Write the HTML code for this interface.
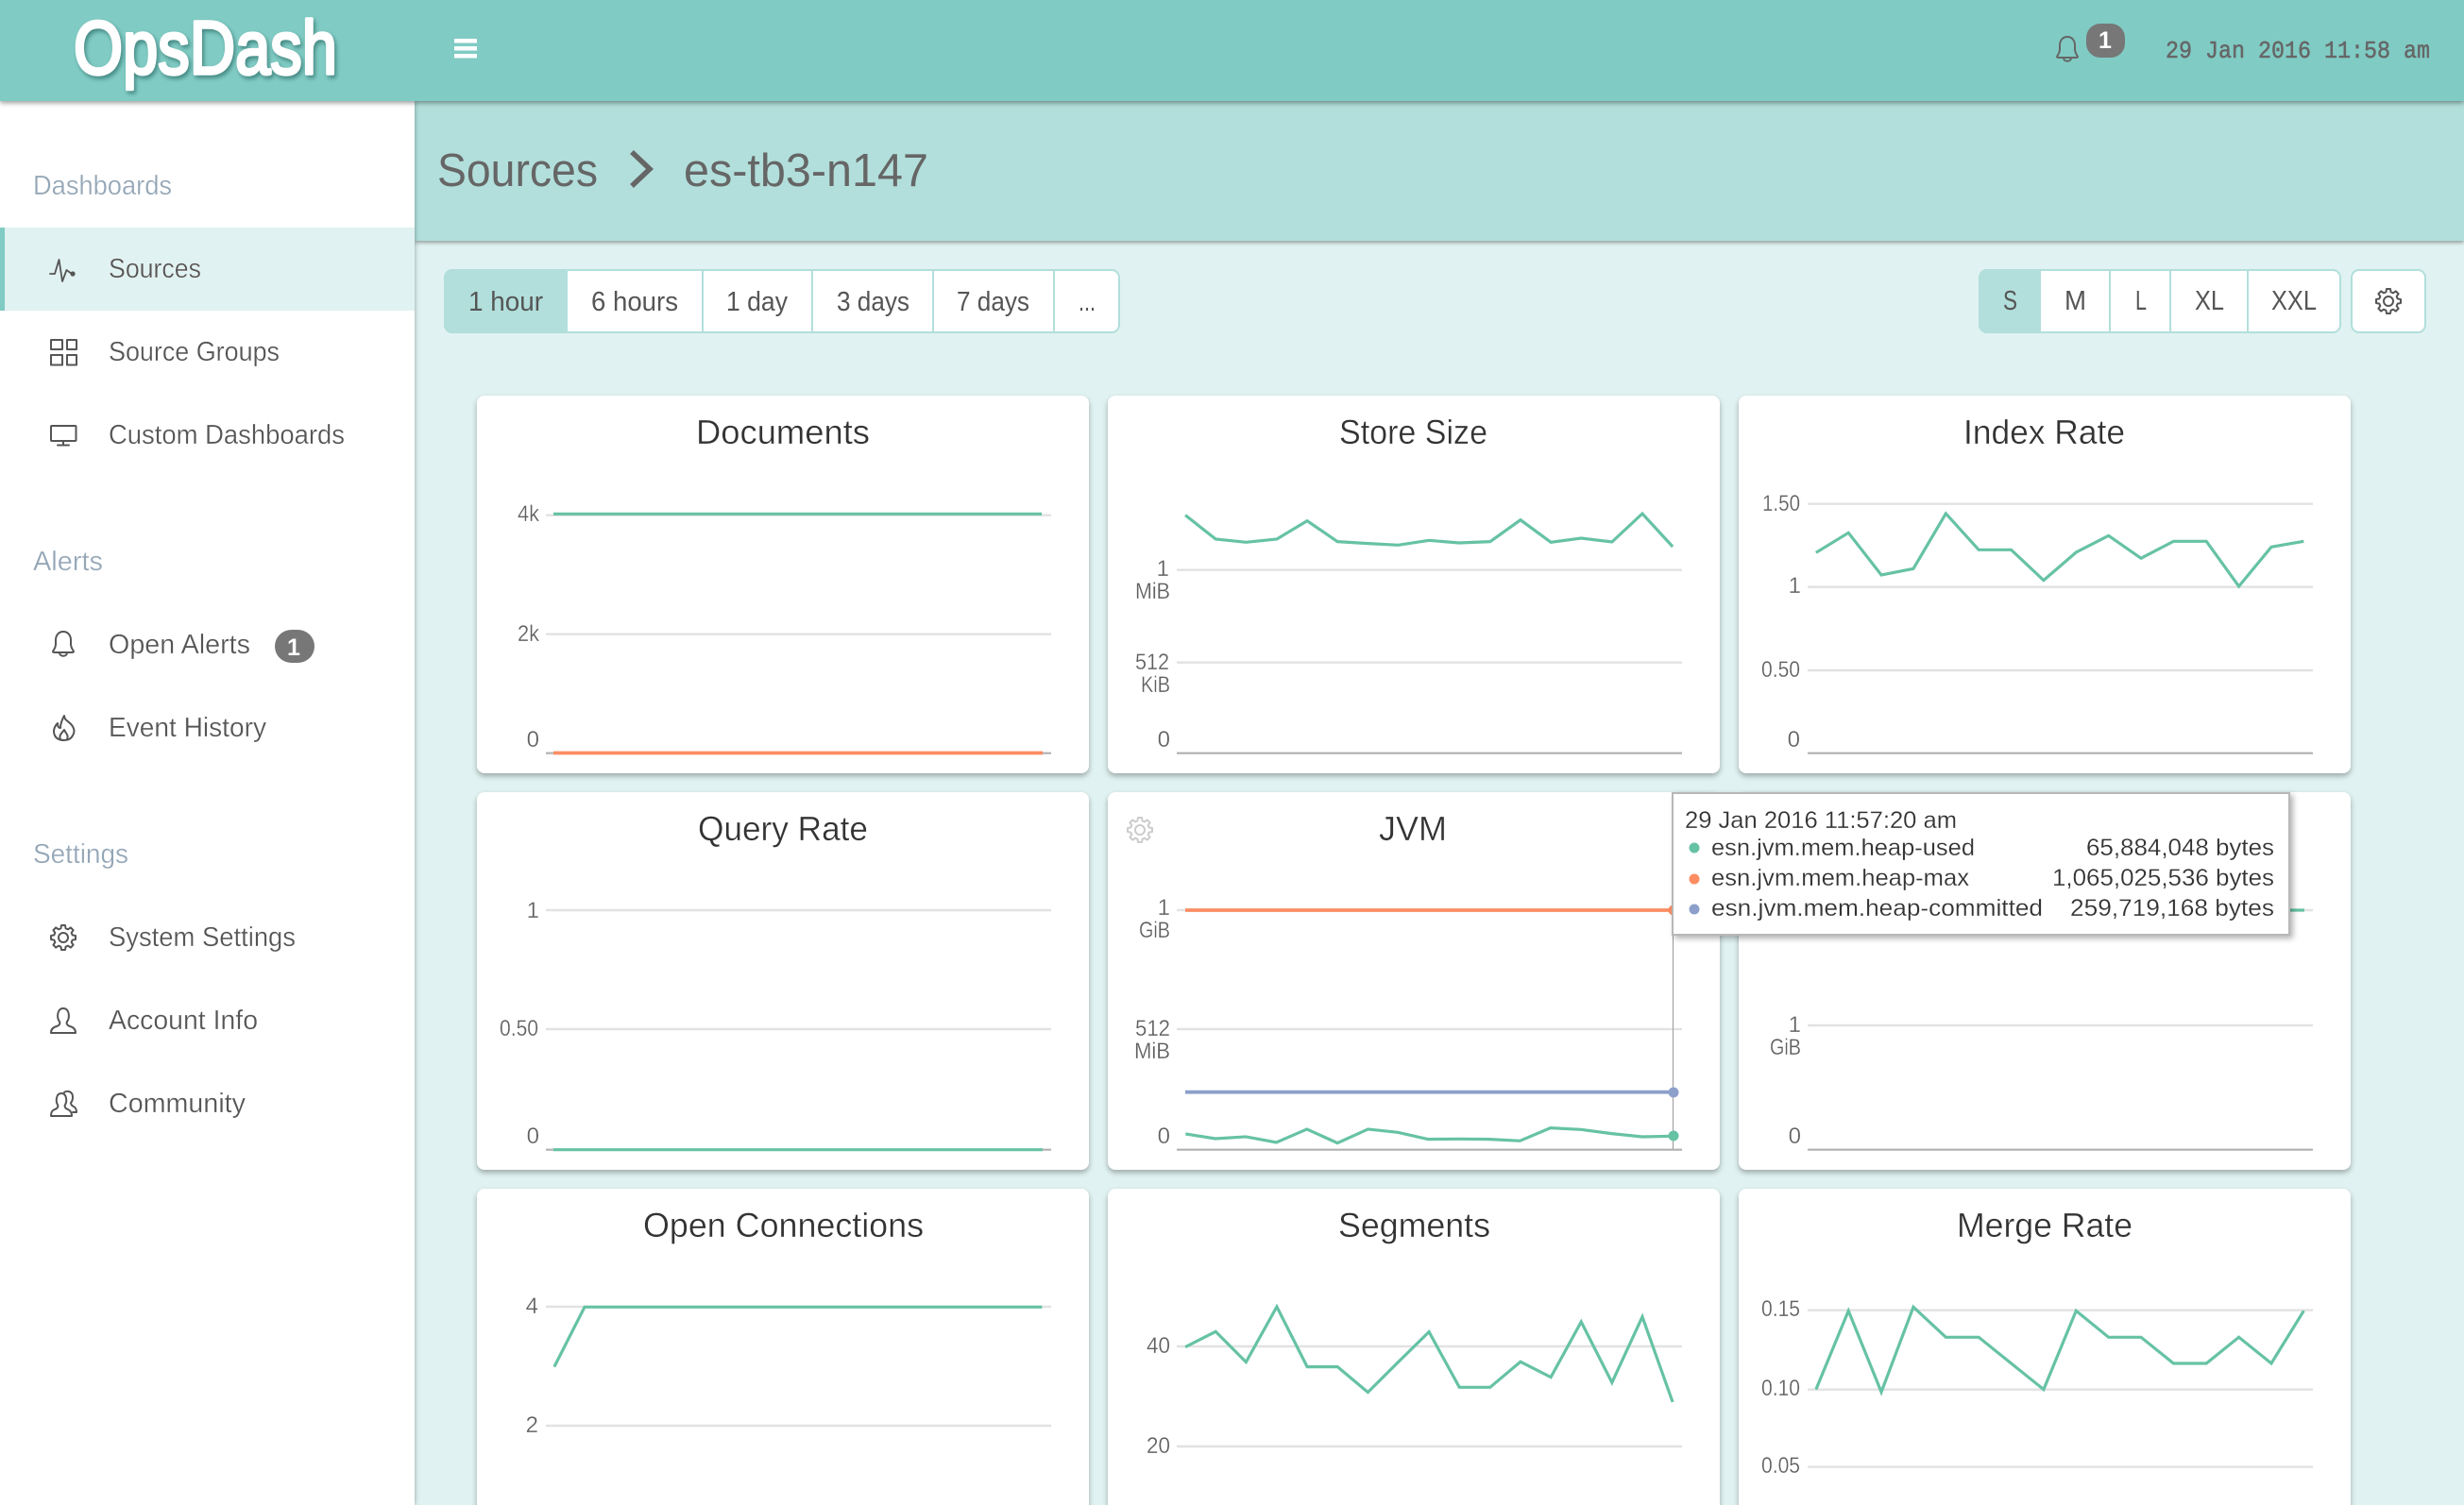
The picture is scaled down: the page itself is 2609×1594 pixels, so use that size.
<!DOCTYPE html>
<html lang="en">
<head>
<meta charset="utf-8">
<title>OpsDash - Sources - es-tb3-n147</title>
<style>
html,body{margin:0;padding:0;width:2609px;height:1594px;overflow:hidden;background:#e0f2f1}
body{position:relative;font-family:"Liberation Sans",sans-serif}
.abs{position:absolute}
#header{left:0;top:0;width:2609px;height:107px;background:#80cbc4;box-shadow:0 2px 5px rgba(0,0,0,.4);z-index:3}
#head{left:439px;top:107px;width:2170px;height:148px;background:#b2dfdb;box-shadow:0 2px 4px rgba(0,0,0,.35);z-index:1}
#side{left:0;top:107px;width:439px;height:1487px;background:#fff;box-shadow:0 0 5px rgba(0,0,0,.35);z-index:2}
#active{left:0;top:241px;width:434px;height:88px;background:#e0f2f1;border-left:5px solid #80cbc4;z-index:2}
.card{position:absolute;width:648px;height:400px;background:#fff;border-radius:8px;box-shadow:0 3px 6px rgba(0,0,0,.3);z-index:1}
.grp{position:absolute;top:285px;height:64px;border:2px solid #b2dfdb;border-radius:9px;background:#fff;z-index:1}
.on{position:absolute;top:285px;height:68px;background:#b2dfdb;border-radius:9px 0 0 9px;z-index:1}
.div{position:absolute;top:285px;width:2px;height:68px;background:#b2dfdb;z-index:1}
#tip{left:1770px;top:839px;width:651px;height:148px;background:#fff;border:2px solid #b8b8b8;box-shadow:3px 3px 6px rgba(0,0,0,.3);z-index:6}
svg.ov{position:absolute;left:0;top:0;width:2609px;height:1594px}
#o1{z-index:5}#o2{z-index:7}
text{font-family:"Liberation Sans",sans-serif}
.nav{font-size:29px;fill:#555;stroke:#fff;stroke-width:.3}
.sec{font-size:29px;fill:#94a6b6;stroke:#fff;stroke-width:.3}
.bt{font-size:29px;fill:#555}
.ttl{font-size:36px;fill:#333;stroke:#fff;stroke-width:.35}
.ax{font-size:24px;fill:#5f5f5f;stroke:#fff;stroke-width:.25}
.tt{font-size:25px;fill:#333;stroke:#fff;stroke-width:.2}
.ic{fill:none;stroke:#555;stroke-width:2;stroke-linejoin:round;stroke-linecap:round}
.g{stroke:#e2e2e2;stroke-width:2.4}
.a{stroke:#b0b0b0;stroke-width:2.2}
.l{fill:none;stroke-width:3.2;stroke-linejoin:miter;vector-effect:non-scaling-stroke}
.gr{stroke:#66c2a5}.or{stroke:#fc8d62;stroke-width:3.8}.bl{stroke:#8da0cb;stroke-width:3.8}
</style>
</head>
<body>
<div class="abs" id="header"></div>
<div class="abs" id="head"></div>
<div class="abs" id="side"></div>
<div class="abs" id="active"></div>

<div class="on" style="left:470px;width:131px"></div>
<div class="grp" style="left:470px;width:712px"></div>
<div class="on" style="left:470px;width:131px;z-index:1"></div>
<div class="div" style="left:743px"></div>
<div class="div" style="left:859px"></div>
<div class="div" style="left:987px"></div>
<div class="div" style="left:1115px"></div>

<div class="grp" style="left:2095px;width:380px"></div>
<div class="on" style="left:2095px;width:66px"></div>
<div class="div" style="left:2233px"></div>
<div class="div" style="left:2297px"></div>
<div class="div" style="left:2379px"></div>
<div class="grp" style="left:2489px;width:76px"></div>

<div class="card" style="left:505px;top:419px"></div>
<div class="card" style="left:1173px;top:419px"></div>
<div class="card" style="left:1841px;top:419px"></div>
<div class="card" style="left:505px;top:839px"></div>
<div class="card" style="left:1173px;top:839px"></div>
<div class="card" style="left:1841px;top:839px"></div>
<div class="card" style="left:505px;top:1259px"></div>
<div class="card" style="left:1173px;top:1259px"></div>
<div class="card" style="left:1841px;top:1259px"></div>

<svg class="ov" id="o1" viewBox="0 0 2609 1594" xmlns="http://www.w3.org/2000/svg">
<defs>
<path id="gear" d="M-2.59-9.66L-2-13H2L2.59-9.66L5-8.66L7.78-10.61L10.61-7.78L8.66-5L9.66-2.59L13-2V2L9.66 2.59L8.66 5L10.61 7.78L7.78 10.61L5 8.66L2.59 9.66L2 13H-2L-2.59 9.66L-5 8.66L-7.78 10.61L-10.61 7.78L-8.66 5L-9.66 2.59L-13 2V-2L-9.66-2.59L-8.66-5L-10.61-7.78L-7.78-10.61L-5-8.66Z M5 0A5 5 0 1 1-5 0A5 5 0 1 1 5 0Z"/>
<path id="bell" d="M12 1C7 1 4 5 4 10V14C4 18 2 20 1 22C1 23 2 23 3 23H21C22 23 23 23 23 22C22 20 20 18 20 14V10C20 5 17 1 12 1Z M8 23C8 28 16 28 16 23"/>
</defs>

<!-- header -->
<text x="78" y="78" textLength="279" lengthAdjust="spacingAndGlyphs" style="font-size:80px;fill:#fff;stroke:#fff;stroke-width:3.5;stroke-linejoin:round;filter:drop-shadow(2px 3px 2px rgba(0,60,55,.45))">OpsDash</text>
<rect x="481" y="41" width="24" height="4.5" fill="#fff"/>
<rect x="481" y="49" width="24" height="4.5" fill="#fff"/>
<rect x="481" y="57" width="24" height="4.5" fill="#fff"/>
<use href="#bell" transform="translate(2177 38)" class="ic" style="stroke:#666"/>
<rect x="2209" y="25" width="41" height="36" rx="15" fill="#777"/>
<text x="2229" y="51" text-anchor="middle" style="font-size:25px;font-weight:bold;fill:#fff">1</text>
<text x="2293" y="61" textLength="280" lengthAdjust="spacingAndGlyphs" style="font-family:'Liberation Mono',monospace;font-size:26px;fill:#666;stroke:#666;stroke-width:.5">29 Jan 2016 11:58 am</text>

<!-- breadcrumb -->
<text x="463" y="197" textLength="170" lengthAdjust="spacingAndGlyphs" style="font-size:49px;fill:#666">Sources</text>
<path d="M669 161L688 179L669 197" fill="none" stroke="#666" stroke-width="5.5"/>
<text x="724" y="197" textLength="259" lengthAdjust="spacingAndGlyphs" style="font-size:49px;fill:#666">es-tb3-n147</text>

<!-- sidebar -->
<text class="sec" x="35" y="206" textLength="147" lengthAdjust="spacingAndGlyphs">Dashboards</text>
<text class="nav" x="115" y="294" textLength="98" lengthAdjust="spacingAndGlyphs">Sources</text>
<text class="nav" x="115" y="382" textLength="181" lengthAdjust="spacingAndGlyphs">Source Groups</text>
<text class="nav" x="115" y="470" textLength="250" lengthAdjust="spacingAndGlyphs">Custom Dashboards</text>
<text class="sec" x="35" y="604" textLength="74" lengthAdjust="spacingAndGlyphs">Alerts</text>
<text class="nav" x="115" y="692" textLength="150" lengthAdjust="spacingAndGlyphs">Open Alerts</text>
<rect x="291" y="667" width="42" height="35" rx="17.5" fill="#777"/>
<text x="311" y="694" text-anchor="middle" style="font-size:25px;font-weight:bold;fill:#fff">1</text>
<text class="nav" x="115" y="780" textLength="167" lengthAdjust="spacingAndGlyphs">Event History</text>
<text class="sec" x="35" y="914" textLength="101" lengthAdjust="spacingAndGlyphs">Settings</text>
<text class="nav" x="115" y="1002" textLength="198" lengthAdjust="spacingAndGlyphs">System Settings</text>
<text class="nav" x="115" y="1090" textLength="158" lengthAdjust="spacingAndGlyphs">Account Info</text>
<text class="nav" x="115" y="1178" textLength="145" lengthAdjust="spacingAndGlyphs">Community</text>

<!-- sidebar icons -->
<path class="ic" d="M53 290H58L62.5 275L66 298L70.5 286L76 290" style="stroke-width:1.8"/>
<circle cx="77" cy="290" r="2.6" fill="#555"/>
<g class="ic">
<rect x="54" y="360" width="12" height="10"/><rect x="71" y="360" width="10" height="10"/>
<rect x="54" y="376" width="12" height="10.5"/><rect x="71" y="376" width="10" height="10.5"/>
<rect x="54" y="451" width="26.5" height="16" rx="1"/><path d="M67 467V471M61 471.5H73"/>
</g>
<use href="#bell" transform="translate(55 668)" class="ic"/>
<g class="ic" transform="translate(56 757)">
<path d="M12 1C12 6 17 7 20 11C23 15 23 19 21 22C19 26 15 27 12 27C8 27 4 26 2 22C0 18 1 13 5 9C5 12 6 14 8 14C8 9 10 5 12 1Z"/>
<path d="M8 26C6 22 9 20 12 16C14 20 17 22 15 26"/>
</g>
<use href="#gear" transform="translate(67 993)" class="ic"/>
<g class="ic" transform="translate(53 1067)">
<path d="M10 15C7 12 7 1 14 1C21 1 21 12 18 15C17 17 18 19 21 20C25 21 27 23 27 27H1C1 23 3 21 7 20C10 19 11 17 10 15Z"/>
</g>
<g class="ic" transform="translate(53 1155)">
<path d="M8 15C6 12 6 3 12 3C18 3 18 12 16 15C15 17 16 19 19 20C21 21 23 23 23 27H1C1 23 2 21 5 20C8 19 9 17 8 15Z"/>
<path d="M15 2C17 0 24 0 24 7C24 10 23 12 22 13C22 15 23 16 25 17C27 18 28 20 28 23H24"/>
</g>

<!-- time & size buttons -->
<text class="bt" x="496" y="329" textLength="79" lengthAdjust="spacingAndGlyphs">1 hour</text>
<text class="bt" x="626" y="329" textLength="92" lengthAdjust="spacingAndGlyphs">6 hours</text>
<text class="bt" x="769" y="329" textLength="65" lengthAdjust="spacingAndGlyphs">1 day</text>
<text class="bt" x="886" y="329" textLength="77" lengthAdjust="spacingAndGlyphs">3 days</text>
<text class="bt" x="1013" y="329" textLength="77" lengthAdjust="spacingAndGlyphs">7 days</text>
<text class="bt" x="1142" y="329" textLength="18" lengthAdjust="spacingAndGlyphs">...</text>
<text class="bt" x="2121" y="328" textLength="15" lengthAdjust="spacingAndGlyphs">S</text>
<text class="bt" x="2186" y="328" textLength="23" lengthAdjust="spacingAndGlyphs">M</text>
<text class="bt" x="2261" y="328" textLength="12" lengthAdjust="spacingAndGlyphs">L</text>
<text class="bt" x="2324" y="328" textLength="31" lengthAdjust="spacingAndGlyphs">XL</text>
<text class="bt" x="2405" y="328" textLength="48" lengthAdjust="spacingAndGlyphs">XXL</text>
<use href="#gear" transform="translate(2529 319)" class="ic"/>

<!-- titles -->
<text class="ttl" x="737" y="470" textLength="184" lengthAdjust="spacingAndGlyphs">Documents</text>
<text class="ttl" x="1418" y="470" textLength="157" lengthAdjust="spacingAndGlyphs">Store Size</text>
<text class="ttl" x="2079" y="470" textLength="171" lengthAdjust="spacingAndGlyphs">Index Rate</text>
<text class="ttl" x="739" y="890" textLength="180" lengthAdjust="spacingAndGlyphs">Query Rate</text>
<text class="ttl" x="1460" y="890" textLength="72" lengthAdjust="spacingAndGlyphs">JVM</text>
<text class="ttl" x="681" y="1310" textLength="297" lengthAdjust="spacingAndGlyphs">Open Connections</text>
<text class="ttl" x="1417" y="1310" textLength="161" lengthAdjust="spacingAndGlyphs">Segments</text>
<text class="ttl" x="2072" y="1310" textLength="186" lengthAdjust="spacingAndGlyphs">Merge Rate</text>
<use href="#gear" transform="translate(1207 879)" class="ic" style="stroke:#ccc"/>

<!-- grid lines -->
<path class="g" d="M578 545.7H1113M578 671.7H1113M1246 603.7H1781M1246 701.7H1781M1914 533.7H2449M1914 621.7H2449M1914 710H2449M578 964H1113M578 1090H1113M1246 964H1781M1246 1090H1781M1914 964H2449M1914 1086H2449M578 1384H1113M578 1510H1113M1246 1426H1781M1246 1532H1781M1914 1387.7H2449M1914 1471.7H2449M1914 1553.7H2449"/>
<path class="a" d="M578 797.7H1113M1246 797.7H1781M1914 797.7H2449M578 1217.7H1113M1246 1217.7H1781M1914 1217.7H2449"/>

<!-- axis labels -->
<text class="ax" x="548" y="552" textLength="23" lengthAdjust="spacingAndGlyphs">4k</text>
<text class="ax" x="548" y="679" textLength="23" lengthAdjust="spacingAndGlyphs">2k</text>
<text class="ax" x="571" y="791" text-anchor="end">0</text>
<text class="ax" x="1238" y="610" text-anchor="end">1</text>
<text class="ax" x="1202" y="634" textLength="37" lengthAdjust="spacingAndGlyphs">MiB</text>
<text class="ax" x="1202" y="709" textLength="36" lengthAdjust="spacingAndGlyphs">512</text>
<text class="ax" x="1208" y="733" textLength="31" lengthAdjust="spacingAndGlyphs">KiB</text>
<text class="ax" x="1239" y="791" text-anchor="end">0</text>
<text class="ax" x="1866" y="541" textLength="40" lengthAdjust="spacingAndGlyphs">1.50</text>
<text class="ax" x="1907" y="628" text-anchor="end">1</text>
<text class="ax" x="1865" y="717" textLength="41" lengthAdjust="spacingAndGlyphs">0.50</text>
<text class="ax" x="1906" y="791" text-anchor="end">0</text>
<text class="ax" x="571" y="972" text-anchor="end">1</text>
<text class="ax" x="529" y="1097" textLength="41" lengthAdjust="spacingAndGlyphs">0.50</text>
<text class="ax" x="571" y="1211" text-anchor="end">0</text>
<text class="ax" x="1239" y="969" text-anchor="end">1</text>
<text class="ax" x="1206" y="993" textLength="33" lengthAdjust="spacingAndGlyphs">GiB</text>
<text class="ax" x="1202" y="1097" textLength="37" lengthAdjust="spacingAndGlyphs">512</text>
<text class="ax" x="1201" y="1121" textLength="38" lengthAdjust="spacingAndGlyphs">MiB</text>
<text class="ax" x="1239" y="1211" text-anchor="end">0</text>
<text class="ax" x="1907" y="1093" text-anchor="end">1</text>
<text class="ax" x="1874" y="1117" textLength="33" lengthAdjust="spacingAndGlyphs">GiB</text>
<text class="ax" x="1907" y="1211" text-anchor="end">0</text>
<text class="ax" x="570" y="1391" text-anchor="end">4</text>
<text class="ax" x="570" y="1517" text-anchor="end">2</text>
<text class="ax" x="1214" y="1433" textLength="25" lengthAdjust="spacingAndGlyphs">40</text>
<text class="ax" x="1214" y="1539" textLength="25" lengthAdjust="spacingAndGlyphs">20</text>
<text class="ax" x="1865" y="1394" textLength="41" lengthAdjust="spacingAndGlyphs">0.15</text>
<text class="ax" x="1865" y="1478" textLength="41" lengthAdjust="spacingAndGlyphs">0.10</text>
<text class="ax" x="1865" y="1560" textLength="41" lengthAdjust="spacingAndGlyphs">0.05</text>

<!-- series -->
<path class="l gr" d="M586 544.3H1103"/>
<path class="l or" d="M586 797.5H1104"/>
<polyline class="l gr" transform="translate(1160 400) scale(.4464 .3333)" points="213,437 285,513 357,523 430,513 502,455 574,521 646,527 718,532 791,517 863,525 936,521 1008,452 1080,523 1152,510 1225,522 1297,432 1369,537"/>
<polyline class="l gr" transform="translate(1830 400) scale(.4464 .3333)" points="208,556 285,493 363,627 439,607 516,432 594,547 671,547 748,644 825,555 902,502 979,574 1056,520 1134,520 1211,663 1288,538 1365,520"/>
<path class="l gr" d="M586 1217.7H1104"/>
<path d="M1771.5 990V1217" stroke="#999" stroke-width="1"/>
<path class="l or" d="M1255 964H1772"/>
<path class="l bl" d="M1255 1156.7H1772"/>
<polyline class="l gr" transform="translate(1150 820) scale(.8292 .3333)" points="127,1143 165,1158 204,1152 243,1170 282,1128 321,1172 360,1128 398,1138 437,1160 476,1159 515,1160 554,1165 593,1124 632,1129 671,1142 710,1152 750,1150"/>
<circle cx="1772" cy="964" r="5.5" fill="#fc8d62"/>
<circle cx="1772" cy="1157" r="5.5" fill="#8da0cb"/>
<circle cx="1772" cy="1203" r="5.5" fill="#66c2a5"/>
<path class="l gr" d="M2415 964H2440"/>
<polyline class="l gr" transform="translate(490 1240) scale(.4464 .3333)" points="217,623 289,433 1374,433"/>
<polyline class="l gr" transform="translate(1160 1240) scale(.4464 .3333)" points="213,560 285,511 357,608 430,432 502,623 574,623 646,704 718,608 791,512 863,688 936,688 1008,607 1080,656 1152,480 1225,673 1297,464 1369,735"/>
<polyline class="l gr" transform="translate(1830 1240) scale(.4464 .3333)" points="208,695 285,445 363,703 439,433 516,529 594,529 671,612 748,695 825,445 902,529 979,529 1056,612 1134,612 1211,529 1288,612 1365,445"/>
</svg>

<div class="abs" id="tip"></div>
<svg class="ov" id="o2" viewBox="0 0 2609 1594" xmlns="http://www.w3.org/2000/svg">
<text class="tt" x="1784" y="877" textLength="288" lengthAdjust="spacingAndGlyphs">29 Jan 2016 11:57:20 am</text>
<circle cx="1794" cy="898" r="5.5" fill="#66c2a5"/>
<text class="tt" x="1812" y="906" textLength="279" lengthAdjust="spacingAndGlyphs">esn.jvm.mem.heap-used</text>
<text class="tt" x="2209" y="906" textLength="199" lengthAdjust="spacingAndGlyphs">65,884,048 bytes</text>
<circle cx="1794" cy="931" r="5.5" fill="#fc8d62"/>
<text class="tt" x="1812" y="938" textLength="273" lengthAdjust="spacingAndGlyphs">esn.jvm.mem.heap-max</text>
<text class="tt" x="2173" y="938" textLength="235" lengthAdjust="spacingAndGlyphs">1,065,025,536 bytes</text>
<circle cx="1794" cy="963" r="5.5" fill="#8da0cb"/>
<text class="tt" x="1812" y="970" textLength="351" lengthAdjust="spacingAndGlyphs">esn.jvm.mem.heap-committed</text>
<text class="tt" x="2192" y="970" textLength="216" lengthAdjust="spacingAndGlyphs">259,719,168 bytes</text>
</svg>
</body>
</html>
